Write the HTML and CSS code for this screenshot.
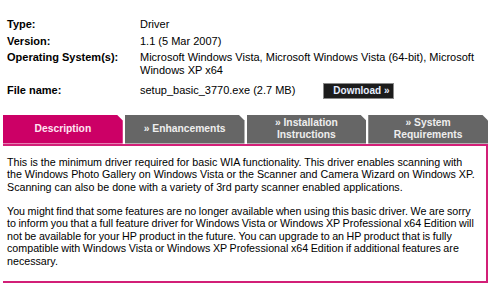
FILE: index.html
```html
<!DOCTYPE html>
<html lang="en">

<head>
    <meta charset="UTF-8">
    <title>Driver details</title>
    <link rel="stylesheet" href="styles.css">
</head>

<body>

    <div class="page">

        <!-- driver info -->
        <div class="info">
            <div class="label">Type:</div>
            <div class="value">Driver</div>

            <div class="label">Version:</div>
            <div class="value">1.1 (5 Mar 2007)</div>

            <div class="label">Operating System(s):</div>
            <div class="value">Microsoft Windows Vista, Microsoft Windows Vista (64-bit), Microsoft Windows XP x64</div>

            <div class="label file">File name:</div>
            <div class="value file">
                <span>setup_basic_3770.exe (2.7 MB)</span>
                <a class="download" href="#">Download &raquo;</a>
            </div>
        </div>

        <!-- tabs -->
        <ul class="tabs">
            <li class="current">Description</li>
            <li>&raquo; Enhancements</li>
            <li>&raquo; Installation<br>Instructions</li>
            <li>&raquo; System<br>Requirements</li>
        </ul>

        <div class="panel">
            <p>This is the minimum driver required for basic WIA functionality. This driver enables scanning with the Windows Photo Gallery on Windows Vista or the Scanner and Camera Wizard on Windows XP. Scanning can also be done with a variety of 3rd party scanner enabled applications.</p>
            <p class="note">You might find that some features are no longer available when using this basic driver. We are sorry to inform you that a full feature driver for Windows Vista or Windows XP Professional x64 Edition will not be available for your HP product in the future. You can upgrade to an HP product that is fully compatible with Windows Vista or Windows XP Professional x64 Edition if additional features are necessary.</p>
        </div>

    </div>

</body>

</html>
```

FILE: styles.css
```css
* {
    padding: 0;
    margin: 0;
    list-style: none;
    border: 0;
}

body {
    font-family: "Liberation Sans", Arial, sans-serif;
    font-size: 11px;
    line-height: 13px;
    color: #000;
    background: #fff;
}

.page {
    width: 485px;
    padding: 18px 0 0 3px;
}

/* 上面的信息表 */
.info {
    display: grid;
    grid-template-columns: 133px 1fr;
    row-gap: 3.5px;
    padding-left: 4px;
}

.info .label {
    font-weight: bold;
}

.info .value {
    padding-right: 8px;
}

.info .file {
    margin-top: 2px;
    display: flex;
    align-items: center;
}

.download {
    margin-left: 28px;
    height: 14px;
    line-height: 14px;
    padding: 0 4px 0 9px;
    white-space: nowrap;
    background: #1c1c1c;
    border: 1px solid #8a8a8a;
    color: #e6eeff;
    font-size: 10px;
    font-weight: bold;
    text-decoration: none;
}

/* 选项卡 */
.tabs {
    display: flex;
    gap: 2px;
    margin-top: 16px;
    height: 29px;
}

.tabs li {
    flex: 1;
    display: flex;
    align-items: center;
    justify-content: center;
    text-align: center;
    font-size: 10.3px;
    line-height: 12px;
    font-weight: bold;
    color: #eeeeee;
    background: #666666;
    clip-path: polygon(0 0, calc(100% - 6px) 0, 100% 6px, 100% 100%, 0 100%);
}

.tabs li.current {
    background: #cc0066;
    color: #ffe6f2;
}

.panel {
    border-top: 2px solid #d21f77;
    border-right: 2px solid #d21f77;
    border-bottom: 2px solid #d21f77;
    padding: 10px 6px 14px 4px;
    font-size: 10.7px;
    line-height: 12.5px;
}

.panel p {
    margin-bottom: 11.5px;
}

/* 第二段字距稍紧一点 */
.panel p.note {
    word-spacing: -0.4px;
}

.panel p:last-child {
    margin-bottom: 0;
}
```
